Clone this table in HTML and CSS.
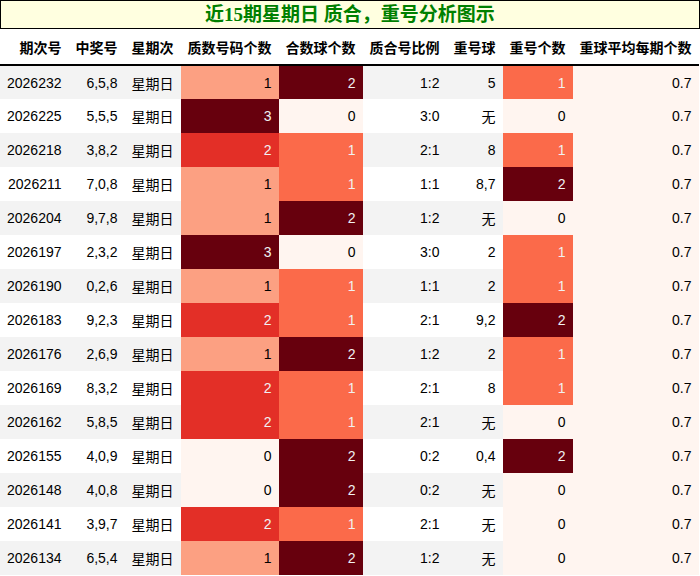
FILE: index.html
```html
<!DOCTYPE html>
<html lang="zh">
<head>
<meta charset="utf-8">
<link rel="stylesheet" href="styles.css">
</head>
<body>
<div class="title">近15期星期日 质合，重号分析图示</div>
<table class="grid">
<thead>
<tr><th>期次号</th><th>中奖号</th><th>星期次</th><th>质数号码个数</th><th>合数球个数</th><th>质合号比例</th><th>重号球</th><th>重号个数</th><th>重球平均每期个数</th></tr>
</thead>
<tbody>
<tr><td>2026232</td><td>6,5,8</td><td>星期日</td><td class="p1">1</td><td class="c2">2</td><td>1:2</td><td>5</td><td class="c1">1</td><td class="c0">0.7</td></tr>
<tr><td>2026225</td><td>5,5,5</td><td>星期日</td><td class="p3">3</td><td class="c0">0</td><td>3:0</td><td>无</td><td class="c0">0</td><td class="c0">0.7</td></tr>
<tr><td>2026218</td><td>3,8,2</td><td>星期日</td><td class="p2">2</td><td class="c1">1</td><td>2:1</td><td>8</td><td class="c1">1</td><td class="c0">0.7</td></tr>
<tr><td>2026211</td><td>7,0,8</td><td>星期日</td><td class="p1">1</td><td class="c1">1</td><td>1:1</td><td>8,7</td><td class="c2">2</td><td class="c0">0.7</td></tr>
<tr><td>2026204</td><td>9,7,8</td><td>星期日</td><td class="p1">1</td><td class="c2">2</td><td>1:2</td><td>无</td><td class="c0">0</td><td class="c0">0.7</td></tr>
<tr><td>2026197</td><td>2,3,2</td><td>星期日</td><td class="p3">3</td><td class="c0">0</td><td>3:0</td><td>2</td><td class="c1">1</td><td class="c0">0.7</td></tr>
<tr><td>2026190</td><td>0,2,6</td><td>星期日</td><td class="p1">1</td><td class="c1">1</td><td>1:1</td><td>2</td><td class="c1">1</td><td class="c0">0.7</td></tr>
<tr><td>2026183</td><td>9,2,3</td><td>星期日</td><td class="p2">2</td><td class="c1">1</td><td>2:1</td><td>9,2</td><td class="c2">2</td><td class="c0">0.7</td></tr>
<tr><td>2026176</td><td>2,6,9</td><td>星期日</td><td class="p1">1</td><td class="c2">2</td><td>1:2</td><td>2</td><td class="c1">1</td><td class="c0">0.7</td></tr>
<tr><td>2026169</td><td>8,3,2</td><td>星期日</td><td class="p2">2</td><td class="c1">1</td><td>2:1</td><td>8</td><td class="c1">1</td><td class="c0">0.7</td></tr>
<tr><td>2026162</td><td>5,8,5</td><td>星期日</td><td class="p2">2</td><td class="c1">1</td><td>2:1</td><td>无</td><td class="c0">0</td><td class="c0">0.7</td></tr>
<tr><td>2026155</td><td>4,0,9</td><td>星期日</td><td class="p0">0</td><td class="c2">2</td><td>0:2</td><td>0,4</td><td class="c2">2</td><td class="c0">0.7</td></tr>
<tr><td>2026148</td><td>4,0,8</td><td>星期日</td><td class="p0">0</td><td class="c2">2</td><td>0:2</td><td>无</td><td class="c0">0</td><td class="c0">0.7</td></tr>
<tr><td>2026141</td><td>3,9,7</td><td>星期日</td><td class="p2">2</td><td class="c1">1</td><td>2:1</td><td>无</td><td class="c0">0</td><td class="c0">0.7</td></tr>
<tr><td>2026134</td><td>6,5,4</td><td>星期日</td><td class="p1">1</td><td class="c2">2</td><td>1:2</td><td>无</td><td class="c0">0</td><td class="c0">0.7</td></tr>
</tbody>
</table>
</body>
</html>
```
FILE: styles.css
```css
body {
  margin: 0;
  background: #fff;
  font-family: "Liberation Sans", "Noto Sans CJK SC", sans-serif;
  font-size: 14px;
  color: #000;
}
.title {
  box-sizing: border-box;
  width: 700px;
  height: 29px;
  border: 1px solid #000;
  background: #ffffe0;
  color: #008000;
  font-family: "Liberation Serif", "Noto Sans CJK SC", serif;
  font-weight: bold;
  font-size: 19px;
  line-height: 27px;
  text-align: center;
}
.grid {
  border-collapse: collapse;
  border-spacing: 0;
}
.grid th,
.grid td {
  height: 34px;
  padding: 0 7px;
  text-align: right;
  white-space: nowrap;
  box-sizing: border-box;
}
.grid th {
  height: 36px;
  padding-top: 1px;
  font-weight: bold;
  border-bottom: 2px solid #000;
}
.grid tbody tr:nth-child(odd) td {
  background: #f3f3f3;
}
.grid tbody tr:nth-child(even) td {
  background: #fff;
}
.grid tbody tr td.p0, .grid tbody tr td.c0 { background: #fff5f0; color: #000; }
.grid tbody tr td.p1 { background: #fca082; color: #000; }
.grid tbody tr td.p2 { background: #e32f27; color: #f1f1f1; }
.grid tbody tr td.p3 { background: #67000d; color: #f1f1f1; }
.grid tbody tr td.c1 { background: #fb6a4a; color: #f1f1f1; }
.grid tbody tr td.c2 { background: #67000d; color: #f1f1f1; }
```
